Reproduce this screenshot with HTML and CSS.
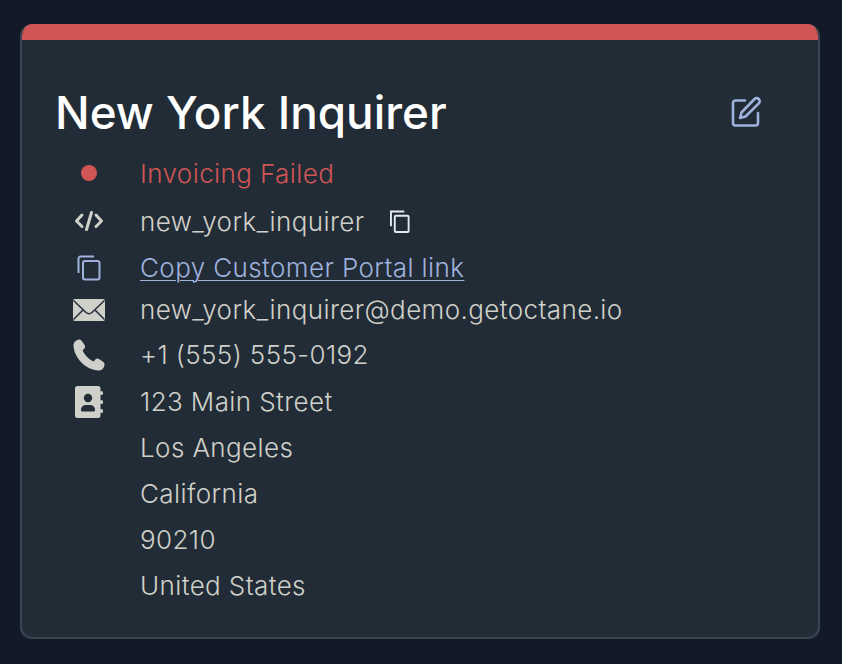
FILE: index.html
```html
<!DOCTYPE html>
<html lang="en">
<head>
<meta charset="utf-8">
<title>New York Inquirer</title>
<link rel="stylesheet" href="styles.css">
</head>
<body>
<main class="card">
  <div class="card-bar"></div>
  <div class="card-body">
    <header class="head">
      <h1 class="title">New York Inquirer</h1>
      <svg class="edit" viewBox="0 0 32 32" fill="none" stroke="currentColor" stroke-width="2.6" stroke-linecap="round" stroke-linejoin="round"><path d="M15 4.500H5.500A2.500 2.500 0 0 0 3 7V27a2.500 2.500 0 0 0 2.500 2.500H25.500A2.500 2.500 0 0 0 28 27V17"/><path d="M24.500 3 a3 3 0 0 1 4.300 4.300L15.500 20.500 10 22l1.500-5.500z"/></svg>
    </header>
    <ul class="rows">
      <li class="row row-status">
        <span class="ico"><span class="dot"></span></span>
        <span class="failed">Invoicing Failed</span>
      </li>
      <li class="row row-code">
        <span class="ico"><svg class="i-code" viewBox="0 0 30 20" fill="none" stroke="currentColor" stroke-width="3" stroke-linecap="round" stroke-linejoin="round"><path d="M8 4 2.500 10 8 15.500"/><path d="M22 4l5.500 6L22 15.500"/><path d="M17.500 1.500 12.500 18.500" /></svg></span>
        <span>new_york_inquirer</span>
        <svg class="copy-small" viewBox="0 0 22 24" fill="none" stroke="currentColor" stroke-width="2"><path d="M1 17V1.500H15"/><rect x="5" y="6" width="14.500" height="17" rx="1"/></svg>
      </li>
      <li class="row row-link">
        <span class="ico"><svg class="i-copy" viewBox="0 0 24 26" fill="none" stroke="currentColor" stroke-width="2" stroke-linejoin="round"><path d="M1.500 18V3.500a2 2 0 0 1 2-2H17"/><rect x="6" y="6" width="16.500" height="18.500" rx="2"/></svg></span>
        <a class="link" href="#">Copy Customer Portal link</a>
      </li>
      <li class="row row-mail">
        <span class="ico"><svg class="i-mail" viewBox="0 0 32 22"><rect width="32" height="22" rx="2" fill="currentColor"/><path d="M0.500 1.500 13 13.500q3 2.500 6 0L31.500 1.500M0.500 20.500 10.500 10.500M31.500 20.500 21.500 10.500" fill="none" stroke="#222c36" stroke-width="1.500"/></svg></span>
        <span>new_york_inquirer@demo.getoctane.io</span>
      </li>
      <li class="row row-phone">
        <span class="ico"><svg class="i-phone" viewBox="0 0 32 32"><path d="M6 .5 C3 1 0.500 3 .5 6.500 1 19 13 31 25.500 31.500c3.500 0 5.500-2.500 6-5.500 .3-1.500-.5-2.500-1.500-3.200l-4-2.800c-1.300-.8-2.600-.7-3.600.4L20.500 22.500C15.500 20 12 16.500 9.500 11.500l1.700-1.800c1-1 1.200-2.400.4-3.600L8.800 2C8 1 7.300 .3 6 .5z" fill="currentColor"/></svg></span>
        <span>+1 (555) 555-0192</span>
      </li>
      <li class="row row-address">
        <span class="ico"><svg class="i-book" viewBox="0 0 28 32"><path d="M2.500 0H23a2.500 2.500 0 0 1 2.500 2.500V29.500A2.500 2.500 0 0 1 23 32H2.500A2.500 2.500 0 0 1 0 29.500V2.500A2.500 2.500 0 0 1 2.500 0z" fill="currentColor"/><rect x="25" y="5" width="3" height="4" rx="1.500" fill="currentColor"/><rect x="25" y="14" width="3" height="4" rx="1.500" fill="currentColor"/><rect x="25" y="23" width="3" height="4" rx="1.500" fill="currentColor"/><circle cx="13" cy="12" r="4.200" fill="#222c36"/><path d="M6 24c0-3.500 2.500-5 5-5h4c2.500 0 5 1.500 5 5 0 1-.5 1.500-1.500 1.500h-11C6.500 25.500 6 25 6 24z" fill="#222c36"/></svg></span>
        <address class="addr">
          <span>123 Main Street</span>
          <span>Los Angeles</span>
          <span>California</span>
          <span>90210</span>
          <span>United States</span>
        </address>
      </li>
    </ul>
  </div>
</main>
</body>
</html>
```
FILE: styles.css
```css
* { box-sizing: border-box; }
html, body { height: 100%; }
body {
  margin: 0;
  padding: 24px 22px 25px 20px;
  background: #111a26;
  font-family: "Inter", "Noto Sans", sans-serif;
  color: #cfd0c9;
}
.card {
  height: 615px;
  background: #222c36;
  border: 2px solid #3a4551;
  border-top: 0;
  border-radius: 12px;
  overflow: hidden;
}
.card-bar {
  height: 16px;
  margin: 0 -2px;
  background: #d05555;
}
.card-body { padding: 51px 0 0 33px; }
.head {
  display: flex;
  align-items: center;
  justify-content: space-between;
  padding-right: 56px;
  height: 44px;
}
.title {
  margin: 0;
  font-size: 45.8px;
  font-weight: 500;
  line-height: 44px;
  color: #fff;
}
.edit { width: 32px; height: 32px; margin-top: -2px; color: #9fb2dd; }
.rows {
  list-style: none;
  margin: 15px 0 0;
  padding: 0;
  font-size: 26px;
  font-weight: 300;
  letter-spacing: 0.4px;
}
.row { display: flex; align-items: center; }
.ico {
  flex: none;
  width: 85px;
  padding-right: 18px;
  display: flex;
  justify-content: center;
}
.row-status { height: 46px; color: #d05555; }
.row-code { height: 50px; }
.row-link { height: 43px; }
.row-mail { height: 41px; }
.row-phone { height: 49px; }
.row-address { align-items: flex-start; }
.row-address .ico { padding-top: 7px; }
.dot { width: 16px; height: 16px; border-radius: 50%; background: #d05555; }
.i-code { width: 30px; height: 20px; }
.i-copy { width: 24px; height: 26px; color: #9fb2dd; }
.i-mail { width: 32px; height: 22px; }
.i-phone { width: 32px; height: 32px; }
.i-book { width: 28px; height: 32px; }
.copy-small { width: 21px; height: 23px; margin-left: 26px; color: #e2e8f5; }
.link { color: #9fb2dd; text-decoration: underline; text-underline-offset: 3px; text-decoration-thickness: 1px; }
.addr { font-style: normal; display: flex; flex-direction: column; }
.addr span { height: 46px; line-height: 46px; }
```
